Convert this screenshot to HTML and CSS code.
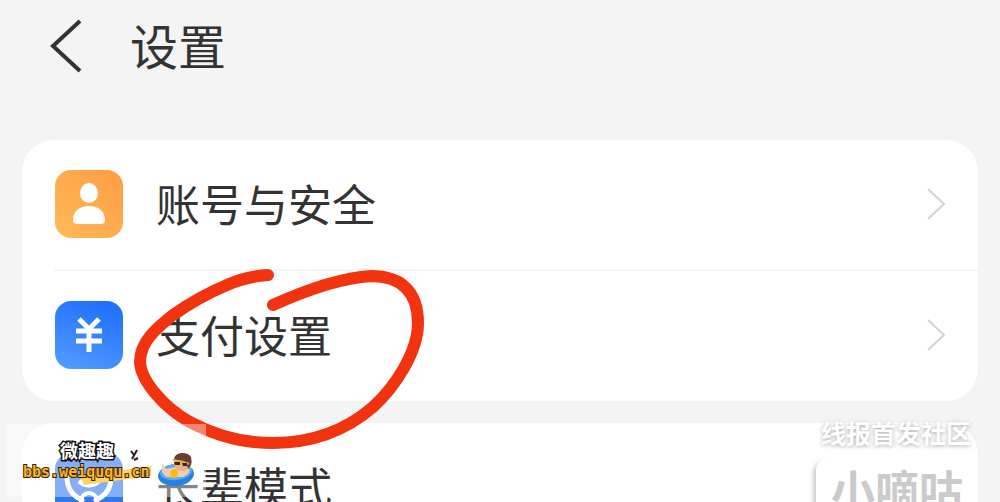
FILE: index.html
```html
<!DOCTYPE html>
<html lang="zh-CN">
<head>
    <meta charset="UTF-8">
    <meta name="viewport" content="width=device-width, initial-scale=1.0">
    <title>设置</title>
    <link rel="stylesheet" href="styles.css">
</head>
<body>
    <header class="header">
        <button type="button" class="back-btn" aria-label="返回">
            <svg width="36" height="56" viewBox="0 0 36 56" fill="none" stroke="#333" stroke-width="4">
                <path d="M32 3 L5 28 L32 53"/>
            </svg>
        </button>
        <h1>设置</h1>
    </header>

    <main>
        <nav class="card">
            <a href="#account" class="row">
                <svg class="row-icon" viewBox="0 0 68 68">
                    <defs>
                        <linearGradient id="orange" x1="1" y1="0" x2="0" y2="1">
                            <stop offset="0" stop-color="#ff9d43"/>
                            <stop offset="1" stop-color="#ffba58"/>
                        </linearGradient>
                    </defs>
                    <rect width="68" height="68" rx="16" fill="url(#orange)"/>
                    <ellipse cx="34" cy="23" rx="9" ry="10" fill="#fff"/>
                    <path d="M18 50 C18 41 25 36 34 36 C43 36 50 41 50 50 Q50 54 46 54 H22 Q18 54 18 50 Z" fill="#fff"/>
                </svg>
                <span class="row-label">账号与安全</span>
                <svg class="row-arrow" viewBox="0 0 20 34"><path d="M2 2 L18 17 L2 32"/></svg>
            </a>
            <a href="#payment" class="row">
                <svg class="row-icon" viewBox="0 0 68 68">
                    <defs>
                        <linearGradient id="blue" x1="0.7" y1="0" x2="0.3" y2="1">
                            <stop offset="0" stop-color="#1f70fb"/>
                            <stop offset="1" stop-color="#4f99ff"/>
                        </linearGradient>
                    </defs>
                    <rect width="68" height="68" rx="16" fill="url(#blue)"/>
                    <path d="M24 18 L34 28 L44 18 M21 30 H47 M21 40 H47 M34 27 V51" fill="none" stroke="#fff" stroke-width="5"/>
                </svg>
                <span class="row-label">支付设置</span>
                <svg class="row-arrow" viewBox="0 0 20 34"><path d="M2 2 L18 17 L2 32"/></svg>
            </a>
        </nav>

        <nav class="card">
            <a href="#elder" class="row">
                <svg class="row-icon" viewBox="0 0 68 68">
                    <rect width="68" height="68" rx="16" fill="#3478ee"/>
                    <path d="M12 24 C12 36 18 43 27 47 M56 24 C56 36 50 43 41 47" fill="none" stroke="#fff" stroke-width="5" stroke-linecap="round"/>
                    <path d="M24 28 Q34 36 44 28" fill="none" stroke="#fff" stroke-width="5"/>
                    <circle cx="34" cy="48" r="8" fill="none" stroke="#fff" stroke-width="4"/>
                </svg>
                <span class="row-label">长辈模式</span>
            </a>
        </nav>
    </main>

    <!-- hand drawn mark round the payment row -->
    <svg class="mark" width="440" height="460" viewBox="0 0 440 460">
        <path d="M268 275 C252 276 240 279 227 285 C208 293 190 303 173 315 C158 327 140 341 140 362 C141 382 166 409 190 422 C216 436 243 443 273 443 C310 443 344 432 373 407 C395 387 418 352 418 323 C418 292 402 276 371 276 C338 278 304 291 273 305"/>
    </svg>

    <div class="stamp">
        <svg class="stamp-art" width="201" height="73" viewBox="0 0 201 73">
            <path d="M75 52 L146 42 V52 L79 61 Z" fill="#ffd45c"/>
            <path d="M126 27 L129 31 M132 26 L127 35 M129 36 L133 34" stroke="#36151a" stroke-width="2" fill="none"/>
            <ellipse cx="171" cy="51" rx="18" ry="11" fill="#2681df" transform="rotate(-6 171 51)"/>
            <ellipse cx="171" cy="48" rx="16" ry="8" fill="#55adf4" transform="rotate(-6 171 48)"/>
            <path d="M157 39 L161 45 L171 43 L184 44 Q186 50 178 53 L161 53 L157 48 Z" fill="#f7cbb2"/>
            <path d="M165 48 Q169 42 173 47 L172 54 L166 54 Z" fill="#f8b91c"/>
            <ellipse cx="177" cy="40" rx="8" ry="7" fill="#eab189"/>
            <path d="M169 37 C168 27 183 27 186 33 Q188 41 183 45 Q183 38 169 37 Z" fill="#654036"/>
            <path d="M168 36 Q177 37 184 40" stroke="#edb51b" stroke-width="2" fill="none"/>
            <path d="M169 38 H175 V41 H170 Z M177 39 H182 V42 H178 Z" fill="#332923"/>
        </svg>
        <div class="stamp-name">微趣趣</div>
        <div class="stamp-url">bbs.weiququ.cn</div>
    </div>

    <div class="source">
        <div class="source-title">线报首发社区</div>
        <div class="source-box">小嘀咕</div>
    </div>
</body>
</html>
```
FILE: styles.css
```css
* {
    box-sizing: border-box;
}
body {
    margin: 0;
    height: 100vh;
    position: relative;
    overflow: hidden;
    background-color: #f4f4f4;
    color: #333;
    font-family: "Noto Sans CJK SC", sans-serif;
}
.header {
    display: flex;
    align-items: center;
    gap: 32px;
    height: 92px;
    padding-left: 48px;
    margin-bottom: 48px;
}
.back-btn {
    display: flex;
    width: 50px;
    padding: 0;
    border: 0;
    background: none;
}
h1 {
    margin: 0;
    padding-bottom: 4px;
    font-size: 48px;
    line-height: 64px;
    font-weight: 400;
}
.card {
    margin: 0 22px 22px;
    border-radius: 32px;
    background-color: #fff;
}
.row {
    display: flex;
    align-items: center;
    height: 130px;
    padding: 0 32px 2px 33px;
    position: relative;
    color: inherit;
    text-decoration: none;
}
.row + .row {
    height: 131px;
}
.row + .row::before {
    content: "";
    position: absolute;
    top: -1px;
    left: 32px;
    right: 0;
    height: 2px;
    background-color: #f5f5f5;
}
.row-icon {
    width: 68px;
    height: 68px;
    margin-right: 33px;
}
.row-label {
    flex: 1;
    padding-bottom: 2px;
    font-size: 44px;
    line-height: 64px;
}
.row-arrow {
    width: 20px;
    height: 34px;
    fill: none;
    stroke: #d2d2d2;
    stroke-width: 2;
}
.mark {
    position: absolute;
    top: 0;
    left: 0;
    fill: none;
    stroke: #f1330f;
    stroke-width: 12;
    stroke-linecap: round;
    stroke-linejoin: round;
}

/* watermarks */
.stamp {
    position: absolute;
    top: 424px;
    left: 5px;
    width: 201px;
    height: 73px;
    padding: 15px 0 0 18px;
    background-color: rgba(255, 255, 255, 0.4);
}
.stamp-art {
    position: absolute;
    top: 0;
    left: 0;
}
.stamp-name,
.stamp-url {
    position: relative;
    line-height: 22px;
    font-weight: 700;
    paint-order: stroke fill;
}
.stamp-name {
    padding-left: 37px;
    font-size: 18px;
    color: #fff;
    -webkit-text-stroke: 3px #111;
}
.stamp-url {
    font-family: "DejaVu Sans Mono", monospace;
    font-size: 15px;
    color: #ffb31f;
    -webkit-text-stroke: 2px #33240c;
}
.source {
    position: absolute;
    top: 416px;
    right: 24px;
    width: 160px;
}
.source-title {
    padding-left: 5px;
    font-size: 25px;
    line-height: 32px;
    font-weight: 700;
    color: #fff;
    text-shadow: 0 1px 4px #aaa;
}
.source-box {
    margin-top: 9px;
    padding: 0 15px;
    border-radius: 14px;
    background-color: #fff;
    box-shadow: -3px 3px 4px rgba(0, 0, 0, 0.2);
    font-size: 44px;
    line-height: 64px;
    font-weight: 700;
    color: #cbcbcb;
    white-space: nowrap;
}
```
